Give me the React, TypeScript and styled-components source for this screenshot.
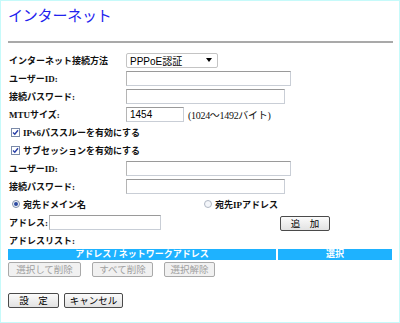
import React from 'react';
import styled, { createGlobalStyle } from 'styled-components';

const GlobalStyle = createGlobalStyle`
  html, body {
    margin: 0;
    padding: 0;
    background: #ffffff;
  }
  body {
    font-family: "Liberation Sans", "Noto Sans CJK JP", sans-serif;
  }
`;

const App = () => {
  return (
    <Page>
      <GlobalStyle />
      <Title>インターネット</Title>
      <Rule />
      <Form>
        <Row>
          <Label>インターネット接続方法</Label>
          <Select>
            <span>PPPoE認証</span>
            <Arrow />
          </Select>
        </Row>
        <Row>
          <Label>ユーザーID:</Label>
          <Input width={165} />
        </Row>
        <Row>
          <Label>接続パスワード:</Label>
          <Input width={159} />
        </Row>
        <Row>
          <Label>MTUサイズ:</Label>
          <Input width={58} defaultValue="1454" />
          <Hint>(1024～1492バイト)</Hint>
        </Row>
        <Row>
          <Check checked />
          <CheckLabel>IPv6パススルーを有効にする</CheckLabel>
        </Row>
        <Row>
          <Check checked />
          <CheckLabel>サブセッションを有効にする</CheckLabel>
        </Row>
        <Row>
          <Label>ユーザーID:</Label>
          <Input width={165} />
        </Row>
        <Row>
          <Label>接続パスワード:</Label>
          <Input width={159} />
        </Row>
        <Row>
          <RadioGroup>
            <Radio checked />
            <CheckLabel>宛先ドメイン名</CheckLabel>
          </RadioGroup>
          <RadioGroup>
            <Radio />
            <CheckLabel>宛先IPアドレス</CheckLabel>
          </RadioGroup>
        </Row>
        <Row>
          <ShortLabel>アドレス:</ShortLabel>
          <Input width={112} />
          <AddWrap>
            <Button width={50}>追　加</Button>
          </AddWrap>
        </Row>
        <Row>
          <Label>アドレスリスト:</Label>
        </Row>
      </Form>
      <ListHead>
        <HeadCell>アドレス / ネットワークアドレス</HeadCell>
        <HeadCell narrow>選択</HeadCell>
      </ListHead>
      <ListActions>
        <Button disabled width={73}>選択して削除</Button>
        <Button disabled width={61}>すべて削除</Button>
        <Button disabled width={51}>選択解除</Button>
      </ListActions>
      <Footer>
        <Button width={51}>設　定</Button>
        <Button width={59}>キャンセル</Button>
      </Footer>
    </Page>
  );
};

export default App;

const Check = ({ checked }: { checked?: boolean }) => (
  <CheckBox>
    {checked && (
      <svg width="7" height="7" viewBox="0 0 7 7">
        <path d="M1 3.5 L2.8 5.3 L6 1.2" fill="none" stroke="#2a3fa8" strokeWidth="1.4" />
      </svg>
    )}
  </CheckBox>
);

const Radio = ({ checked }: { checked?: boolean }) => (
  <RadioDot checked={checked}>{checked && <RadioInner />}</RadioDot>
);

const Page = styled.div`
  width: 400px;
  height: 323px;
  box-sizing: border-box;
  border: 1px solid #c6fafa;
  padding: 0 7px 0 7px;
  display: flex;
  flex-direction: column;
  overflow: hidden;
`;

const Title = styled.h1`
  margin: 6px 0 0 0;
  font-size: 15px;
  line-height: 18px;
  font-weight: normal;
  color: #2222ee;
  letter-spacing: -0.2px;
`;

const Rule = styled.div`
  margin-top: 16px;
  height: 2px;
  background: #a9a9a9;
  width: 385px;
`;

const Form = styled.div`
  display: flex;
  flex-direction: column;
  margin-top: 8px;
`;

const Row = styled.div`
  display: flex;
  align-items: center;
  height: 18px;
`;

const Label = styled.span`
  width: 117px;
  flex: none;
  padding-left: 1px;
  font-family: "Liberation Serif", "Noto Sans CJK JP", serif;
  font-size: 9px;
  font-weight: bold;
  color: #111111;
  white-space: nowrap;
`;

const ShortLabel = styled(Label)`
  width: 40px;
`;

const Input = styled.input<{ width: number }>`
  width: ${(p) => p.width}px;
  height: 15px;
  box-sizing: border-box;
  border: 1px solid #c9ced6;
  border-top-color: #9a9a9a;
  border-left-color: #b5b5b5;
  padding: 0 3px;
  font-family: "Liberation Sans", sans-serif;
  font-size: 10px;
  color: #000;
  outline: none;
`;

const Select = styled.div`
  width: 92px;
  height: 15px;
  box-sizing: border-box;
  border: 1px solid #c4c4c4;
  border-radius: 2px;
  display: flex;
  align-items: center;
  justify-content: space-between;
  padding: 0 5px 0 3px;
  font-size: 10px;
  color: #000;
`;

const Arrow = styled.span`
  width: 0;
  height: 0;
  border-left: 3.5px solid transparent;
  border-right: 3.5px solid transparent;
  border-top: 4px solid #000;
`;

const Hint = styled.span`
  margin-left: 4px;
  font-family: "Liberation Serif", "Noto Sans CJK JP", serif;
  font-size: 10px;
  color: #111;
  letter-spacing: -0.3px;
`;

const CheckBox = styled.span`
  margin-left: 3px;
  width: 9px;
  height: 9px;
  box-sizing: border-box;
  border: 1px solid #7a8aa8;
  background: #fff;
  display: inline-flex;
  align-items: center;
  justify-content: center;
  flex: none;
`;

const CheckLabel = styled.span`
  margin-left: 3px;
  font-family: "Liberation Serif", "Noto Sans CJK JP", serif;
  font-size: 9px;
  font-weight: bold;
  color: #111;
  white-space: nowrap;
`;

const RadioGroup = styled.span`
  display: flex;
  align-items: center;
  width: 188px;
  padding-left: 4px;
`;

const RadioDot = styled.span<{ checked?: boolean }>`
  width: 8px;
  height: 8px;
  border-radius: 50%;
  box-sizing: border-box;
  border: 1px solid ${(p) => (p.checked ? '#7f8fa8' : '#b0b8c4')};
  background: #f4f6fa;
  display: inline-flex;
  align-items: center;
  justify-content: center;
  flex: none;
`;

const RadioInner = styled.span`
  width: 4px;
  height: 4px;
  border-radius: 50%;
  background: #2b4aa0;
`;

const AddWrap = styled.div`
  margin-left: 119px;
`;

const Button = styled.button<{ width: number }>`
  width: ${(p) => p.width}px;
  height: 15px;
  box-sizing: border-box;
  padding: 0;
  border: 1px solid ${(p) => (p.disabled ? '#a9a9a9' : '#4a4a4a')};
  border-radius: 2px;
  background: ${(p) =>
    p.disabled ? '#f1f1f1' : 'linear-gradient(#fbfbfb, #e2e2e2)'};
  font-family: "Noto Sans CJK JP", sans-serif;
  font-size: 9.5px;
  line-height: 13px;
  color: ${(p) => (p.disabled ? '#a0a0a0' : '#000')};
  white-space: nowrap;
`;

const ListHead = styled.div`
  display: flex;
  gap: 2px;
  width: 384px;
`;

const HeadCell = styled.div<{ narrow?: boolean }>`
  ${(p) => (p.narrow ? 'width: 114px;' : 'flex: 1;')}
  height: 11px;
  background: #1eb2ff;
  color: #fff;
  font-size: 9px;
  font-weight: bold;
  line-height: 11px;
  text-align: center;
  white-space: nowrap;
`;

const ListActions = styled.div`
  display: flex;
  gap: 11px;
  margin-top: 2px;
`;

const Footer = styled.div`
  display: flex;
  gap: 5px;
  margin-top: 16px;
`;
